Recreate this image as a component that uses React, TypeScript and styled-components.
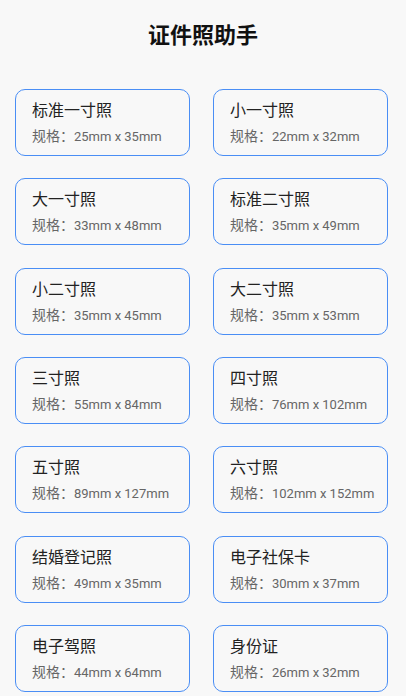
import styled, { createGlobalStyle } from 'styled-components';

const GlobalStyle = createGlobalStyle`
  html, body {
    margin: 0;
    padding: 0;
    background: #f8f8f8;
    font-family: Roboto, "Noto Sans CJK SC", sans-serif;
  }
`

const Page = styled.div`
  display: flex;
  flex-direction: column;
  padding: 21px 18px 0 15px;
`

const Title = styled.h1`
  margin: 0;
  font-size: 22px;
  line-height: 30px;
  font-weight: 700;
  color: #111;
  text-align: center;
  padding-left: 3px;
`

const Grid = styled.div`
  margin-top: 38px;
  display: grid;
  grid-template-columns: minmax(0, 1fr) minmax(0, 1fr);
  grid-auto-rows: 67px;
  column-gap: 23px;
  row-gap: 22.33px;
`

const Card = styled.div`
  box-sizing: border-box;
  border: 1px solid #4a8ef5;
  border-radius: 10px;
  padding: 10px 16px 0;
  display: flex;
  flex-direction: column;
  gap: 4px;
  min-width: 0;
  overflow: hidden;
`

const Name = styled.div`
  height: 22px;
  font-size: 16px;
  line-height: 22px;
  color: #222;
  white-space: nowrap;
`

const Spec = styled.div`
  height: 20px;
  font-size: 14px;
  line-height: 20px;
  color: #666;
  white-space: nowrap;
`

const Size = styled.span`
  font-size: 13px;
  line-height: 20px;
`

const sizes: Array<[string, string]> = [
  ['标准一寸照', '25mm x 35mm'],
  ['小一寸照', '22mm x 32mm'],
  ['大一寸照', '33mm x 48mm'],
  ['标准二寸照', '35mm x 49mm'],
  ['小二寸照', '35mm x 45mm'],
  ['大二寸照', '35mm x 53mm'],
  ['三寸照', '55mm x 84mm'],
  ['四寸照', '76mm x 102mm'],
  ['五寸照', '89mm x 127mm'],
  ['六寸照', '102mm x 152mm'],
  ['结婚登记照', '49mm x 35mm'],
  ['电子社保卡', '30mm x 37mm'],
  ['电子驾照', '44mm x 64mm'],
  ['身份证', '26mm x 32mm'],
]

const App = () =>
  <>
    <GlobalStyle />
    <Page>
      <Title>证件照助手</Title>
      <Grid>
        {sizes.map(([name, spec]) =>
          <Card key={name}>
            <Name>{name}</Name>
            <Spec>规格：<Size>{spec}</Size></Spec>
          </Card>)}
      </Grid>
    </Page>
  </>

export default App
